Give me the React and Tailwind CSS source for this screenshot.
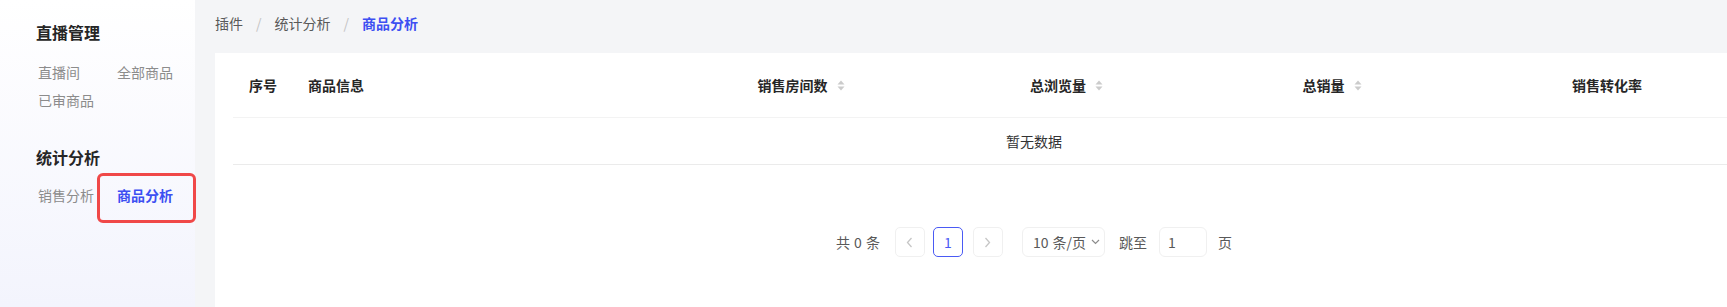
// App.jsx
const columns = [
  { key: "index", label: "序号", width: "w-[59px]", align: "left" },
  { key: "info", label: "商品信息", width: "w-[376px]", align: "left" },
  { key: "rooms", label: "销售房间数", width: "w-[266px]", sortable: true },
  { key: "views", label: "总浏览量", width: "w-[265px]", sortable: true },
  { key: "sales", label: "总销量", width: "w-[266px]", sortable: true },
  { key: "rate", label: "销售转化率", width: "w-[284px]" },
  { key: "blank", label: "", width: "w-[86px]" },
];

const SortIcon = () => (
  <svg width="8" height="11" viewBox="0 0 8 11" className="ml-[9px] shrink-0">
    <path d="M4 0.5 L7.5 4.5 L0.5 4.5 Z" fill="#cbcbcb" />
    <path d="M4 10.5 L7.5 6.5 L0.5 6.5 Z" fill="#cbcbcb" />
  </svg>
);

const Chevron = ({ dir = "left" }) => (
  <svg width="7" height="11" viewBox="0 0 7 11" fill="none">
    <path
      d={dir === "left" ? "M5.5 1 L1.5 5.5 L5.5 10" : "M1.5 1 L5.5 5.5 L1.5 10"}
      stroke="#c6c6c6"
      strokeWidth="1.3"
    />
  </svg>
);

function Sidebar() {
  return (
    <aside className="w-[195px] shrink-0 h-full bg-gradient-to-b from-white to-[#f3f4fd] pl-[36px] pt-[20px]">
      {/* 直播管理 */}
      <h3 className="text-[16px] leading-[24px] font-bold text-[#262626]">直播管理</h3>
      <div className="grid grid-cols-[79px_1fr] mt-[14px] pl-[2px] text-[14px] text-[#8c8c8c]">
        <span className="leading-[28px]">直播间</span>
        <span className="leading-[28px]">全部商品</span>
        <span className="leading-[28px]">已审商品</span>
      </div>

      {/* 统计分析 */}
      <h3 className="mt-[31px] text-[16px] leading-[24px] font-bold text-[#262626]">统计分析</h3>
      <div className="grid grid-cols-[79px_1fr] mt-[12px] pl-[2px] text-[14px] text-[#8c8c8c]">
        <span className="leading-[28px]">销售分析</span>
        <span className="relative leading-[28px] font-bold text-[#3d4ff2] w-fit">
          商品分析
          <span className="absolute -left-[20px] -right-[23px] -top-[8px] -bottom-[14px] border-[3px] border-[#f04848] rounded-[6px]" />
        </span>
      </div>
    </aside>
  );
}

function Pagination() {
  return (
    <div className="w-[1602px] flex justify-center items-center text-[14px] text-[#595959] whitespace-nowrap">
      <span className="flex gap-[4px]">
        <span>共</span>
        <span>0</span>
        <span>条</span>
      </span>
      <button className="ml-[15px] w-[30px] h-[30px] rounded-[5px] border border-[#f0f0f0] flex items-center justify-center">
        <Chevron dir="left" />
      </button>
      <button className="ml-[8px] w-[30px] h-[30px] rounded-[5px] border-[1.5px] border-[#4a5af4] text-[#4a5af4] flex items-center justify-center">
        1
      </button>
      <button className="ml-[10px] w-[30px] h-[30px] rounded-[5px] border border-[#f0f0f0] flex items-center justify-center">
        <Chevron dir="right" />
      </button>
      <div className="ml-[19px] w-[83px] h-[30px] rounded-[6px] border border-[#f0f0f0] flex items-center pl-[10px]">
        <span>10</span>
        <span className="ml-[4px]">条/页</span>
        <svg width="9" height="6" viewBox="0 0 9 6" fill="none" className="ml-[5px]">
          <path d="M1 1 L4.5 4.5 L8 1" stroke="#8c8c8c" strokeWidth="1.2" />
        </svg>
      </div>
      <span className="ml-[14px]">跳至</span>
      <div className="ml-[12px] w-[48px] h-[30px] rounded-[6px] border border-[#f0f0f0] flex items-center pl-[8px]">
        1
      </div>
      <span className="ml-[11px]">页</span>
    </div>
  );
}

export default function App() {
  return (
    <div
      className="w-[1727px] h-[307px] overflow-hidden flex bg-[#f4f5f7]"
      style={{ fontFamily: '"Noto Sans CJK SC", "Noto Sans", sans-serif' }}
    >
      <Sidebar />

      <main className="flex-1 min-w-0 flex flex-col pl-[20px]">
        {/* breadcrumb */}
        <nav className="h-[53px] shrink-0 flex items-start pt-[13px] text-[14px] leading-[20px] text-[#595959]">
          <span>插件</span>
          <span className="mx-[13px] text-[#c4c4c4]">/</span>
          <span>统计分析</span>
          <span className="mx-[13px] text-[#c4c4c4]">/</span>
          <span className="font-bold text-[#3d4ff2]">商品分析</span>
        </nav>

        {/* card */}
        <section className="flex-1 bg-white pl-[18px] w-[1640px]">
          <div className="w-[1602px]">
            <div className="flex h-[65px] items-center border-b border-[#f3f3f3] text-[14px] font-bold text-[#262626] whitespace-nowrap">
              {columns.map((c) => (
                <div
                  key={c.key}
                  className={`${c.width} shrink-0 px-[16px] flex items-center ${
                    c.align === "left" ? "justify-start" : "justify-center"
                  }`}
                >
                  <span>{c.label}</span>
                  {c.sortable && <SortIcon />}
                </div>
              ))}
            </div>
            <div className="h-[47px] flex items-center justify-center border-b border-[#ebebeb] text-[14px] text-[#333333]">
              暂无数据
            </div>
          </div>

          <div className="mt-[62px]">
            <Pagination />
          </div>
        </section>
      </main>
    </div>
  );
}
